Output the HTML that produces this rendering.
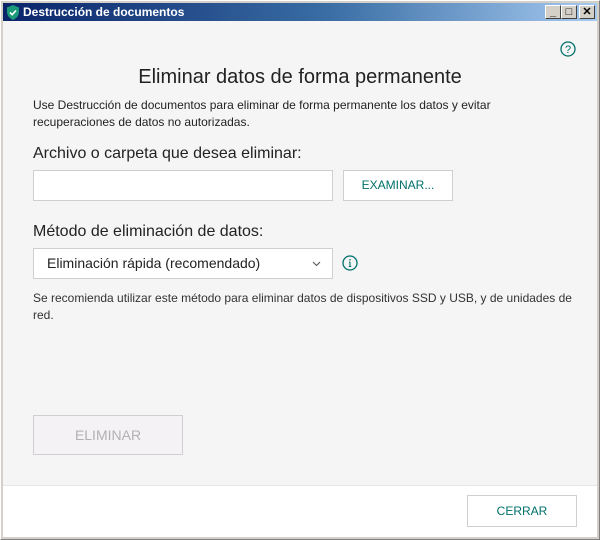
<!DOCTYPE html>
<html><head><meta charset="utf-8"><style>
*{box-sizing:border-box;margin:0;padding:0}
body{width:600px;height:540px;background:#d4d0c8;font-family:"Liberation Sans",sans-serif;position:relative;overflow:hidden;color:#333}
.win{position:absolute;left:0;top:0;width:600px;height:540px;border:1px solid #808080;border-left-color:#fff;border-top-color:#fff}
.title{position:absolute;left:3px;top:3px;width:594px;height:18px;background:linear-gradient(90deg,#0a246a,#3a6ea5 55%,#a6caf0)}
.title span{position:absolute;left:20px;top:2px;color:#fff;font-weight:bold;font-size:12px}
.tb{position:absolute;top:2px;width:16px;height:14px;background:#d4d0c8;border:1px solid;border-color:#fff #404040 #404040 #fff;font-size:11px;font-weight:bold;text-align:center;line-height:12px;color:#000}
.content{position:absolute;left:3px;top:21px;width:594px;height:464px;background:#f5f5f5}
.footer{position:absolute;left:3px;top:485px;width:594px;height:52px;background:#fff;border-top:1px solid #e6e6e6}
.a{position:absolute}
.box{position:absolute;background:#fff;border:1px solid #cfcfcf}
.btn{position:absolute;background:#fff;border:1px solid #cfcfcf;text-align:center;color:#00706b;font-size:12px}
</style></head><body>
<div class="win"></div>
<div class="title">
<svg class="a" style="left:3px;top:2px" width="14" height="15" viewBox="0 0 14 15"><path d="M7 0L13 2.5V7C13 11 10 13.5 7 15C4 13.5 1 11 1 7V2.5Z" fill="#1a9a78"/><path d="M4 7.5L6.2 9.7L10 5.5" stroke="#fff" stroke-width="1.6" fill="none"/></svg>
<span>Destrucción de documentos</span>
<div class="tb" style="left:542px">_</div><div class="tb" style="left:558px">□</div><div class="tb" style="left:576px">✕</div>
</div>
<div class="content"></div>
<div class="footer"></div>
<svg class="a" style="left:560px;top:41px" width="16" height="16" viewBox="0 0 16 16"><circle cx="8" cy="8" r="7" fill="none" stroke="#00706b" stroke-width="1.3"/><text x="8" y="12" font-size="11" text-anchor="middle" fill="#00706b" font-family="Liberation Sans">?</text></svg>
<div class="a" style="left:0;width:600px;top:66px;text-align:center;font-size:20px;color:#222">Eliminar datos de forma permanente</div>
<div class="a" style="left:33px;top:97px;font-size:12px;line-height:17px;color:#222;width:540px">Use Destrucción de documentos para eliminar de forma permanente los datos y evitar recuperaciones de datos no autorizadas.</div>
<div class="a" style="left:33px;top:145px;font-size:16px;color:#222">Archivo o carpeta que desea eliminar:</div>
<div class="box" style="left:33px;top:170px;width:300px;height:31px"></div>
<div class="btn" style="left:343px;top:170px;width:110px;height:31px;line-height:29px">EXAMINAR...</div>
<div class="a" style="left:33px;top:223px;font-size:16px;color:#222">Método de eliminación de datos:</div>
<div class="box" style="left:33px;top:248px;width:300px;height:31px;font-size:14px;line-height:29px;padding-left:13px;color:#222">Eliminación rápida (recomendado)<svg class="a" style="left:278px;top:12px" width="9" height="6" viewBox="0 0 9 6"><path d="M1 1L4.5 4.5L8 1" stroke="#555" stroke-width="1.1" fill="none"/></svg></div>
<svg class="a" style="left:342px;top:255px" width="16" height="16" viewBox="0 0 16 16"><circle cx="8" cy="8" r="7" fill="none" stroke="#00706b" stroke-width="1.3"/><path d="M8 7V11.5M6.8 11.5H9.2M7 7H8" stroke="#00706b" stroke-width="1.1" fill="none"/><circle cx="8" cy="4.8" r=".8" fill="#00706b"/></svg>
<div class="a" style="left:33px;top:290px;font-size:12px;line-height:17px;color:#333;width:540px">Se recomienda utilizar este método para eliminar datos de dispositivos SSD y USB, y de unidades de red.</div>
<div class="btn" style="left:33px;top:415px;width:150px;height:40px;line-height:38px;background:#f4f2f4;color:#b3b0b3;font-size:14px">ELIMINAR</div>
<div class="btn" style="left:467px;top:495px;width:110px;height:32px;line-height:30px">CERRAR</div>
</body></html>
